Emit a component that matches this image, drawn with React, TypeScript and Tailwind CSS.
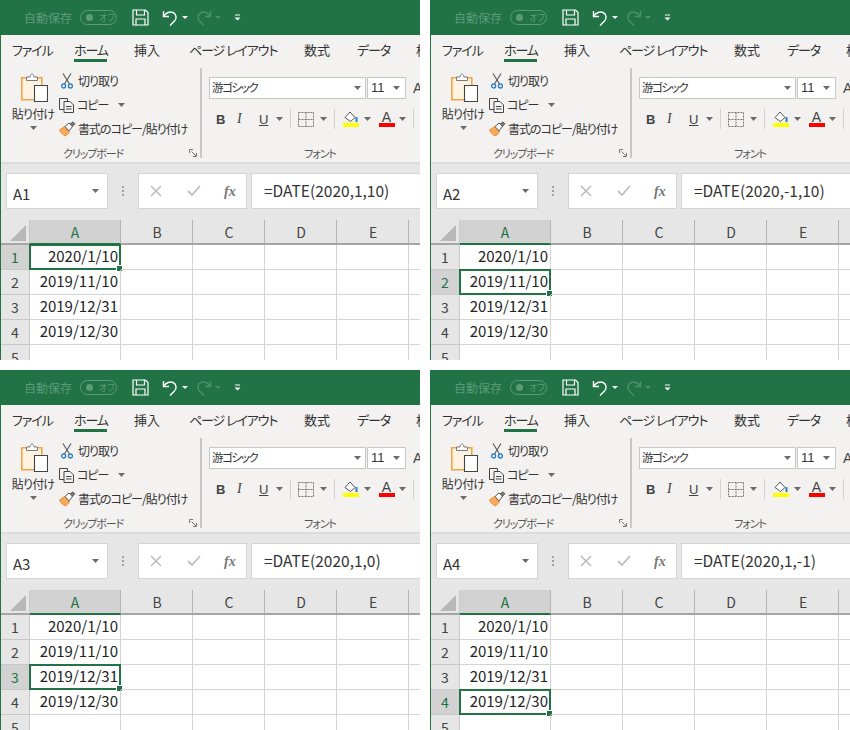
import React from "react";

const JP = "font-['Yu_Gothic_UI','Noto_Sans_CJK_JP',sans-serif] [font-feature-settings:'palt']";

const Caret: React.FC<{ className?: string }> = ({ className = "" }) => (
  <svg width="7" height="4" viewBox="0 0 7 4" className={`shrink-0 ${className}`}>
    <path d="M0 0h7L3.5 4z" fill="#6a6a6a" />
  </svg>
);

const SaveIcon = () => (
  <svg width="17" height="17" viewBox="0 0 17 17" fill="none" stroke="#fff" strokeWidth="1.2">
    <path d="M1 1h12.5L16 3.5V16H1z" />
    <path d="M4.5 1v5h8V1M4 16V10h9v6" />
  </svg>
);

const UndoIcon = ({ dim = false }: { dim?: boolean }) => (
  <svg width="17" height="17" viewBox="0 0 17 17" fill="none" stroke={dim ? "#4d8f6c" : "#fff"} strokeWidth="1.4" className={dim ? "-scale-x-100" : ""}>
    <path d="M1.5 2v5.5H7" />
    <path d="M1.8 7.2 C4 3.5 8 2.2 11 3.5 C14.5 5 15 9.5 12.5 12 L8 16.5" />
  </svg>
);

const TitleBar = () => (
  <div className={`h-[35px] bg-[#217346] flex items-center pl-[23px] shrink-0 ${JP}`}>
    <span className="text-[12px] text-[#5d9a78] w-[56px] whitespace-nowrap">自動保存</span>
    <div className="w-[37px] h-[15px] rounded-full border border-[#5d9a78] flex items-center pl-[5px] gap-[6px]">
      <span className="w-[7px] h-[7px] rounded-full bg-[#5d9a78]" />
      <span className="text-[9px] leading-none text-[#5d9a78]">オフ</span>
    </div>
    <div className="ml-[15px]"><SaveIcon /></div>
    <div className="ml-[13px]"><UndoIcon /></div>
    <svg width="6" height="3" viewBox="0 0 6 3" className="ml-[3px]"><path d="M0 0h6L3 3z" fill="#fff" /></svg>
    <div className="ml-[7px]"><UndoIcon dim /></div>
    <svg width="6" height="3" viewBox="0 0 6 3" className="ml-[3px]"><path d="M0 0h6L3 3z" fill="#4d8f6c" /></svg>
    <svg width="7" height="7" viewBox="0 0 7 7" className="ml-[13px]"><path d="M1 1h5" stroke="#fff" /><path d="M0.5 3.5h6L3.5 6.5z" fill="#fff" /></svg>
  </div>
);

const tabs = [
  { label: "ファイル", w: 36, ml: 11, kana: true },
  { label: "ホーム", w: 33, ml: 26, kana: true, active: true },
  { label: "挿入", w: 26, ml: 27 },
  { label: "ページ レイアウト", w: 85, ml: 29, kana: true },
  { label: "数式", w: 26, ml: 30 },
  { label: "データ", w: 31, ml: 27, kana: true },
  { label: "校閲", w: 26, ml: 28 },
];

const Tabs = () => (
  <div className={`h-[30px] flex shrink-0 overflow-hidden ${JP}`}>
    {tabs.map((t) => (
      <div
        key={t.label}
        style={{ width: t.w, marginLeft: t.ml }}
        className={`shrink-0 h-[27px] pt-[6px] text-[13px] leading-[18px] whitespace-nowrap text-[#333] ${t.kana ? "tracking-[-1.1px]" : ""} ${t.active ? "border-b-[3px] border-[#217346]" : ""}`}
      >
        {t.label}
      </div>
    ))}
  </div>
);

const PasteIcon = () => (
  <svg width="30" height="30" viewBox="0 0 30 30">
    <path d="M3.8 5.8h20v22h-20z" fill="#fdf3e0" stroke="#f2a544" strokeWidth="1.6" />
    <path d="M8.5 8.5 V5 H12 C12.5 1 15.5 1 16 5 H19.5 V8.5z" fill="#fff" stroke="#7a7a7a" strokeWidth="1" />
    <path d="M16.5 13.5h13v16h-13z" fill="#fff" stroke="#444" strokeWidth="1.1" />
  </svg>
);

const ScissorsIcon = () => (
  <svg width="12" height="16" viewBox="0 0 12 16" fill="none">
    <path d="M2 0.5 L8.5 11 M10 0.5 L3.5 11" stroke="#555" strokeWidth="1.1" />
    <circle cx="2.6" cy="13" r="2" stroke="#2a7dc2" strokeWidth="1.3" />
    <circle cx="9.4" cy="13" r="2" stroke="#2a7dc2" strokeWidth="1.3" />
  </svg>
);

const CopyIcon = () => (
  <svg width="16" height="15" viewBox="0 0 16 15" fill="none" stroke="#444" strokeWidth="1">
    <path d="M5 11.5H0.5V0.5H8.5V3" />
    <path d="M5 3.5h6l3.5 3.5v7.5H5z" fill="#f3f2f1" />
    <path d="M7 8.5h5.5M7 11h5.5" />
  </svg>
);

const BrushIcon = () => (
  <svg width="17" height="16" viewBox="0 0 17 16" fill="none">
    <path d="M0.5 9 L5.5 5.5 L10.5 11 L6.5 15 C4 14 2 12 0.5 9z" fill="#f8a95c" stroke="#ee8a2c" strokeWidth="1" />
    <path d="M6 5.5 L10 2 L13.5 5.5 L10 10z" fill="#fff" stroke="#555" strokeWidth="1" />
    <path d="M11 3 L14 0.8 L16 2.8 L13 6" fill="#777" stroke="#555" strokeWidth="0.8" />
  </svg>
);

const Launcher = () => (
  <svg width="8" height="8" viewBox="0 0 8 8" fill="none" stroke="#777" strokeWidth="1">
    <path d="M0.5 4V0.5H4" />
    <path d="M2.5 2.5L7 7M4 7.5h3.5V4" />
  </svg>
);

const Clipboard = () => (
  <div className="w-[201px] shrink-0 border-r-2 border-[#c8c8c8] h-[90px] flex flex-col mt-[3px]">
    <div className="flex h-[80px] shrink-0">
      <div className="w-[59px] shrink-0 flex flex-col items-center pl-[5px] pt-[4px]">
        <PasteIcon />
        <span className="text-[12px] tracking-[-0.8px] leading-[16px] mt-[4px] whitespace-nowrap text-[#333]">貼り付け</span>
        <Caret className="mt-[4px]" />
      </div>
      <div className="flex flex-col text-[12px] tracking-[-1px] text-[#333] pt-[1px]">
        <div className="h-[24px] shrink-0 flex items-center">
          <div className="w-[18px] pl-[1px]"><ScissorsIcon /></div>
          <span className="whitespace-nowrap">切り取り</span>
        </div>
        <div className="h-[24px] shrink-0 flex items-center">
          <div className="w-[18px] -ml-[1px]"><CopyIcon /></div>
          <span className="whitespace-nowrap">コピー</span>
          <Caret className="ml-[10px]" />
        </div>
        <div className="h-[24px] shrink-0 flex items-center">
          <div className="w-[19px] -ml-[1px]"><BrushIcon /></div>
          <span className="whitespace-nowrap">書式のコピー/貼り付け</span>
        </div>
      </div>
    </div>
    <div className="flex items-center h-[10px] pl-[62px] pr-[3px] justify-between text-[11px] tracking-[-1.1px] text-[#555]">
      <span className="whitespace-nowrap">クリップボード</span>
      <Launcher />
    </div>
  </div>
);

const Sep = () => <span className="w-px h-[20px] bg-[#d2d2d2] shrink-0" />;

const FontGroup = () => (
  <div className="flex-1 min-w-0 h-[90px] mt-[3px] flex flex-col pl-[7px] overflow-visible">
    <div className="flex items-center h-[22px] mt-[9px] shrink-0">
      <div className="w-[157px] h-[22px] shrink-0 bg-white border border-[#c6c6c6] flex items-center pl-[2px] pr-[4px] justify-between text-[11.5px] tracking-[-1.4px] text-[#333]">
        <span>游ゴシック</span>
        <Caret />
      </div>
      <div className="w-[39px] h-[22px] shrink-0 ml-[1px] bg-white border border-[#c6c6c6] flex items-center pl-[3px] pr-[5px] justify-between font-['Liberation_Sans',sans-serif] text-[13px] text-[#333]">
        <span>11</span>
        <Caret />
      </div>
      <span className="ml-[7px] font-['Liberation_Sans',sans-serif] text-[14px] text-[#444]">A</span>
    </div>
    <div className="flex items-center h-[24px] mt-[8px] shrink-0 font-['Liberation_Sans',sans-serif] text-[#444]">
      <span className="ml-[7px] w-[21px] text-[13px] font-bold leading-none">B</span>
      <span className="w-[22px] font-['Liberation_Serif',serif] text-[14px] italic leading-none">I</span>
      <span className="w-[17px] text-[13px] underline leading-none">U</span>
      <Caret />
      <span className="w-[7px]" />
      <Sep />
      <svg width="16" height="15" viewBox="0 0 16 15" fill="none" stroke="#777" strokeWidth="1" strokeDasharray="2 1" className="ml-[7px]">
        <path d="M.5.5h15v14H.5z" />
        <path d="M8 .5v14M.5 7.5h15" />
      </svg>
      <Caret className="ml-[6px]" />
      <span className="w-[7px]" />
      <Sep />
      <div className="ml-[7px] w-[17px] flex flex-col items-center">
        <svg width="16" height="12" viewBox="0 0 16 12" fill="none">
          <path d="M2 6.5 L7 1 L12 6.5 L7.5 10.5z" fill="#fff" stroke="#555" />
          <path d="M13.5 6v5" stroke="#2a7dc2" strokeWidth="2" />
        </svg>
        <span className="w-[16px] h-[4px] bg-[#ffff00]" />
      </div>
      <Caret className="ml-[5px]" />
      <div className="ml-[7px] w-[17px] flex flex-col items-center">
        <span className="text-[14px] leading-[12px]">A</span>
        <span className="w-[16px] h-[4px] bg-[#ff0000]" />
      </div>
      <Caret className="ml-[4px]" />
      <span className="w-[7px]" />
      <Sep />
    </div>
    <div className="mt-auto h-[10px] w-[222px] text-center text-[11px] tracking-[-1.1px] leading-[10px] text-[#555] whitespace-nowrap">フォント</div>
  </div>
);

const FormulaBar = ({ cell, formula }: { cell: string; formula: string }) => (
  <div className="h-[58px] bg-[#e6e6e6] border-t-2 border-[#dcdcdc] shrink-0 pt-[9px] pl-[5px] flex items-start font-['Liberation_Sans',sans-serif]">
    <div className="w-[102px] h-[36px] bg-white border border-[#d4d4d4] flex items-center pl-[6px] pr-[8px] justify-between text-[15px] text-[#333]">
      <span className={`pt-[6px] ${JP}`}>{cell}</span>
      <Caret />
    </div>
    <div className="w-[30px] h-[36px] flex flex-col items-center justify-center gap-[2px] pr-[1px]">
      <span className="w-[2px] h-[2px] bg-[#a0a0a0]" />
      <span className="w-[2px] h-[2px] bg-[#a0a0a0]" />
      <span className="w-[2px] h-[2px] bg-[#a0a0a0]" />
    </div>
    <div className="w-[109px] h-[36px] bg-white border border-[#d4d4d4] flex items-center pl-[11px] shrink-0">
      <svg width="12" height="12" viewBox="0 0 12 12" stroke="#bdbdbd" strokeWidth="1.6" fill="none"><path d="M1 1l10 10M11 1L1 11" /></svg>
      <svg width="14" height="12" viewBox="0 0 14 12" stroke="#bdbdbd" strokeWidth="1.8" fill="none" className="ml-[25px]"><path d="M1 6l4 4 8-9" /></svg>
      <span className="ml-[23px] font-['Liberation_Serif',serif] italic text-[14px] text-[#777] font-semibold">fx</span>
    </div>
    <div className={`ml-[4px] flex-1 min-w-0 h-[36px] bg-white border border-[#d4d4d4] border-r-0 flex items-center pl-[12px] text-[15.5px] text-[#333] whitespace-nowrap overflow-hidden ${JP}`}>
      {formula}
    </div>
  </div>
);

const colWidths = [91, 72, 72, 72, 72, 12];
const colNames = ["A", "B", "C", "D", "E", ""];

const Sheet = ({ selected }: { selected: number }) => {
  const rows = ["2020/1/10", "2019/11/10", "2019/12/31", "2019/12/30", ""];
  return (
    <div className={`flex-1 min-h-0 overflow-hidden bg-white ${JP}`}>
      <div className="h-[25px] flex bg-[#e6e6e6] border-b-2 border-[#a5a5a5]">
        <div className="w-[29px] shrink-0 border-r border-[#c8c8c8] flex items-end justify-end pr-[3px] pb-[2px]">
          <svg width="16" height="16" viewBox="0 0 16 16"><path d="M16 0v16H0z" fill="#b8b8b8" /></svg>
        </div>
        {colWidths.map((w, i) => (
          <div
            key={i}
            style={{ width: w }}
            className={`shrink-0 border-r border-[#b4b4b4] text-center text-[14px] leading-[24px] ${i === 0 ? "h-[25px] bg-[#d2d2d2] text-[#217346] border-b-2 border-b-[#217346]" : "pl-[1px] text-[#444]"}`}
          >
            {colNames[i]}
          </div>
        ))}
      </div>
      {rows.map((text, r) => {
        const sel = r === selected;
        return (
          <div key={r} className="h-[25px] flex">
            <div className={`w-[29px] shrink-0 border-r border-b border-[#c8c8c8] text-center text-[14px] leading-[24px] ${sel ? "bg-[#d2d2d2] text-[#217346]" : "bg-[#e6e6e6] text-[#444]"}`}>
              {r + 1}
            </div>
            {colWidths.map((w, i) => (
              <div
                key={i}
                style={{ width: w }}
                className="relative shrink-0 border-r border-b border-[#d4d4d4] text-right pr-[2px] text-[15px] leading-[22px] text-[#222]"
              >
                {i === 0 ? text : ""}
                {i === 0 && sel && (
                  <div className="absolute -left-px -top-px -right-px -bottom-px border-2 border-[#217346]">
                    <span className="absolute -right-[4px] -bottom-[4px] w-[5px] h-[5px] bg-[#217346] border border-white box-content" />
                  </div>
                )}
              </div>
            ))}
          </div>
        );
      })}
    </div>
  );
};

const Panel = ({ cell, formula, selected }: { cell: string; formula: string; selected: number }) => (
  <div className={`w-[420px] h-[360px] flex flex-col overflow-hidden bg-[#f3f2f1] border-l border-[#217346] ${JP}`}>
    <TitleBar />
    <Tabs />
    <div className="h-[97px] flex shrink-0">
      <Clipboard />
      <FontGroup />
    </div>
    <FormulaBar cell={cell} formula={formula} />
    <Sheet selected={selected} />
  </div>
);

export default function App() {
  return (
    <div className="w-[850px] h-[730px] bg-white grid grid-cols-[420px_420px] gap-x-[10px] gap-y-[10px]">
      <Panel cell="A1" formula="=DATE(2020,1,10)" selected={0} />
      <Panel cell="A2" formula="=DATE(2020,-1,10)" selected={1} />
      <Panel cell="A3" formula="=DATE(2020,1,0)" selected={2} />
      <Panel cell="A4" formula="=DATE(2020,1,-1)" selected={3} />
    </div>
  );
}
